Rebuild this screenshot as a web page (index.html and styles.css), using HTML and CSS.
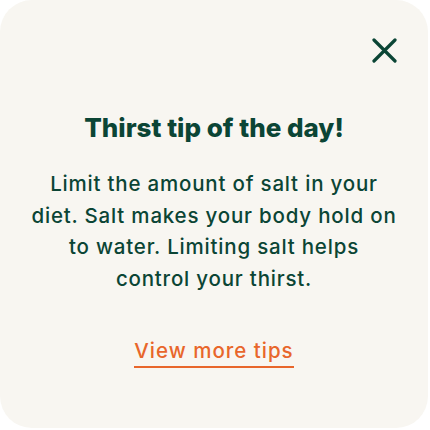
FILE: index.html
```html
<!DOCTYPE html>
<html>
<head>
<meta charset="utf-8">
<link rel="stylesheet" href="styles.css">
</head>
<body>
<div class="card">
  <div class="top">
    <button class="close" aria-label="Close">
      <svg width="25" height="25" viewBox="0 0 25 25"><path d="M2 2L23 23M23 2L2 23" stroke="#0b4535" stroke-width="3.2" stroke-linecap="round" fill="none"/></svg>
    </button>
  </div>
  <h1 class="title">Thirst tip of the day!</h1>
  <p class="body">Limit the amount of salt in your<br>diet. Salt makes your body hold on<br>to water. Limiting salt helps<br>control your thirst.</p>
  <a class="link" href="#">View more tips</a>
</div>
</body>
</html>
```
FILE: styles.css
```css
html, body { margin: 0; padding: 0; background: #ffffff; }
body { width: 430px; height: 430px; }
.card {
  width: 428px;
  height: 428px;
  background: #f8f6f1;
  border-radius: 32px;
  box-sizing: border-box;
  display: flex;
  flex-direction: column;
  align-items: center;
  font-family: Inter, "Liberation Sans", sans-serif;
  color: #0b4535;
  padding: 38px 0 0;
}
.top { align-self: stretch; display: flex; justify-content: flex-end; padding-right: 31px; }
.close { background: none; border: 0; padding: 0; width: 25px; height: 25px; cursor: pointer; display: block; }
.close svg { display: block; }
.title { margin: 48.5px 0 0; font-size: 26px; font-weight: 800; line-height: 32px; letter-spacing: 0; text-align: center; }
.body { margin: 24.5px 0 0; font-size: 20.5px; font-weight: 550; line-height: 31.5px; letter-spacing: 0.8px; text-align: center; white-space: nowrap; }
.link {
  margin-top: 43px;
  display: inline-block;
  font-size: 20.5px;
  font-weight: 500;
  line-height: 28px;
  letter-spacing: 1px;
  color: #e8662b;
  text-decoration: none;
  border-bottom: 2px solid #e8662b;
  padding-bottom: 1px;
}
```
